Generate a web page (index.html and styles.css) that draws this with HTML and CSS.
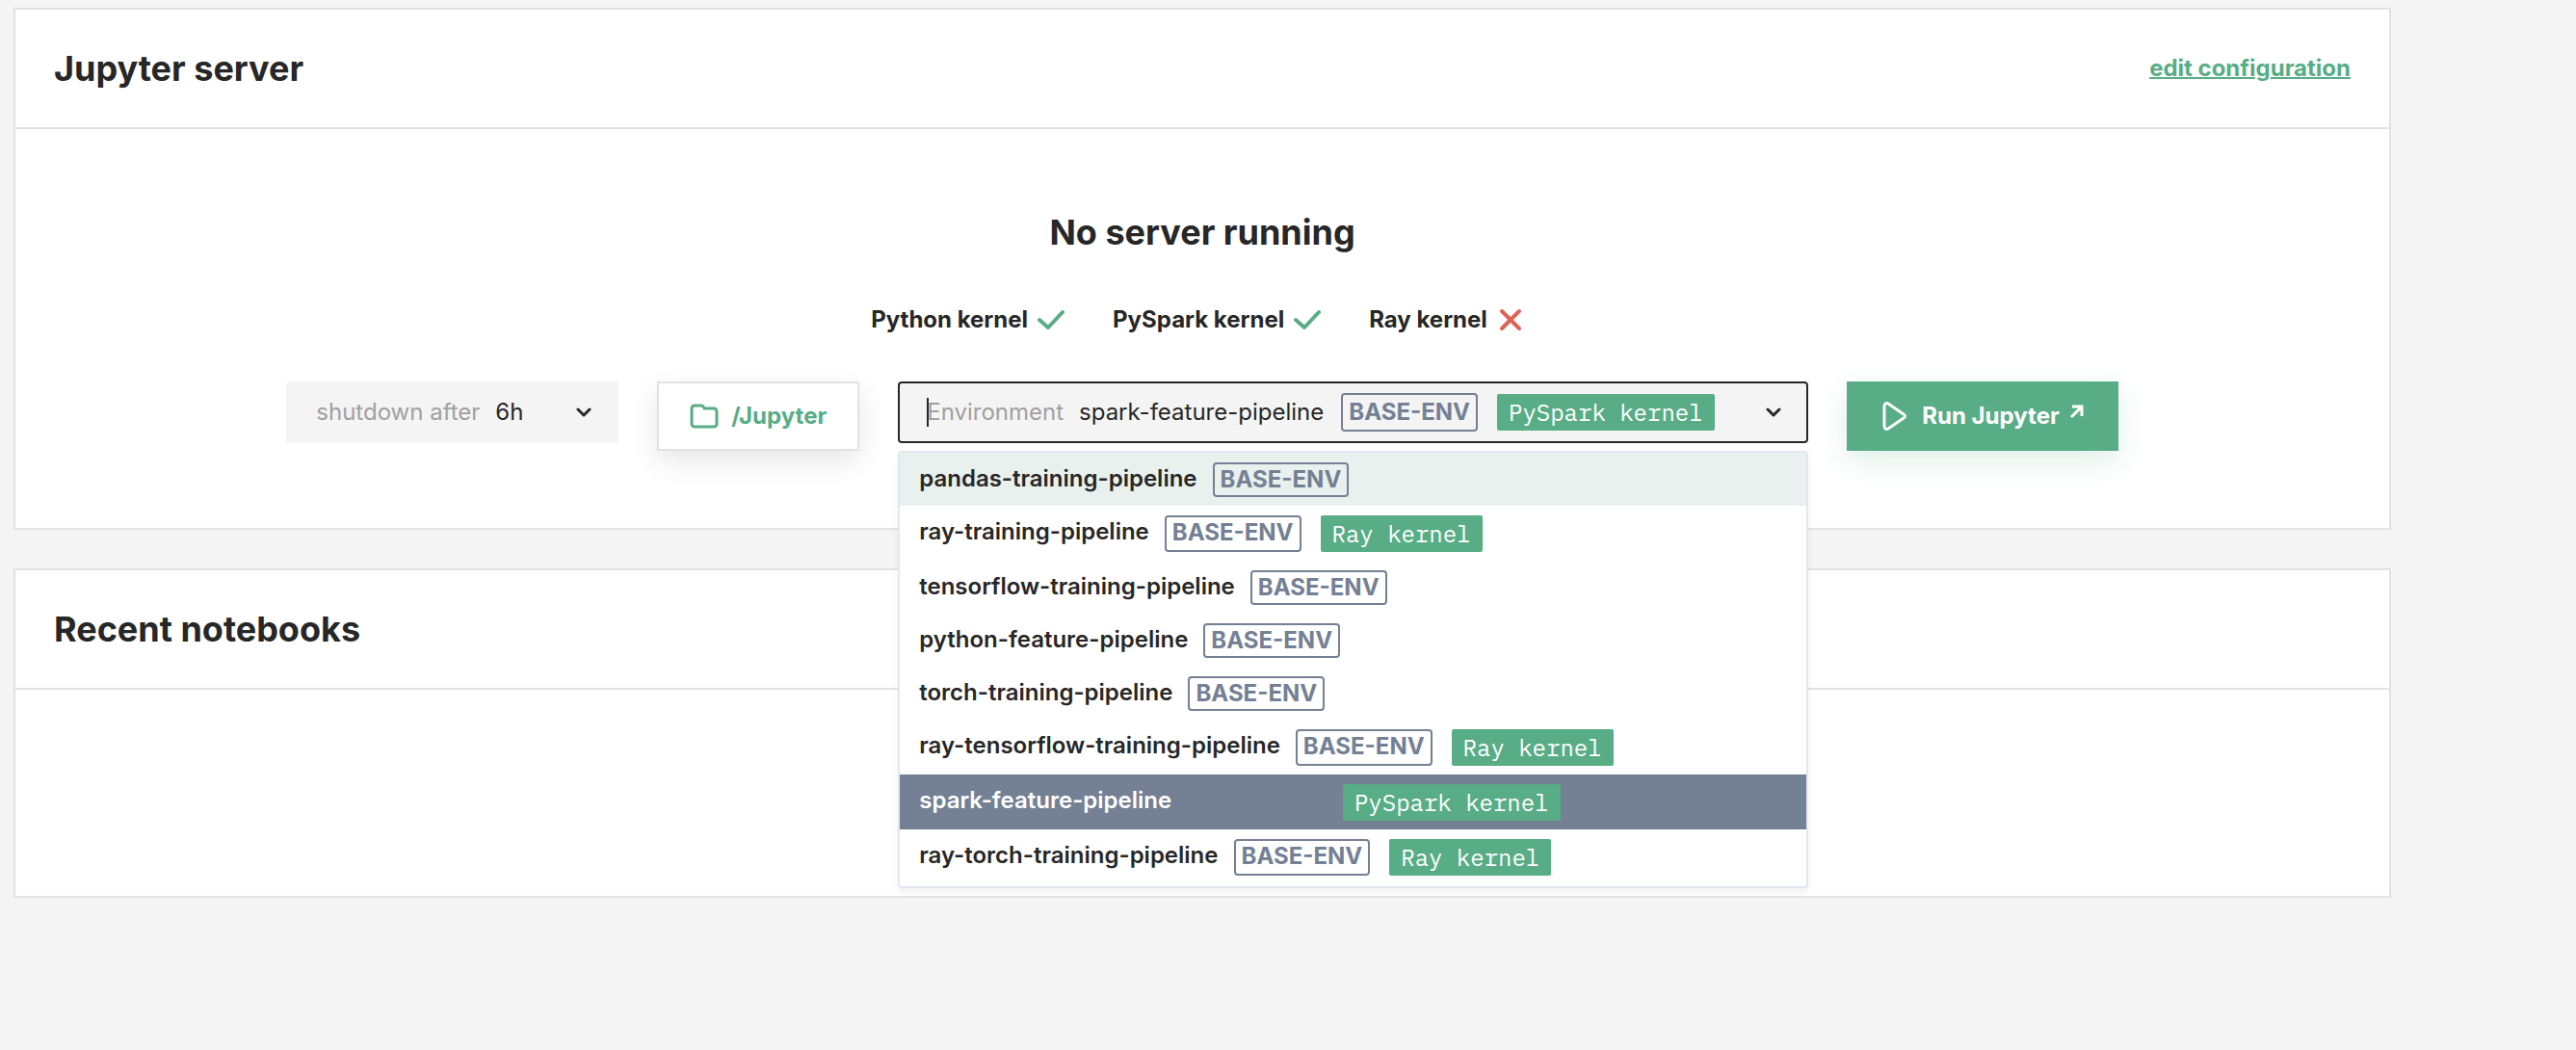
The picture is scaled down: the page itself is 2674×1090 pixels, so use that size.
FILE: index.html
```html
<!DOCTYPE html>
<html lang="en">
<head>
<meta charset="utf-8">
<title>Jupyter server</title>
<meta name="viewport" content="width=device-width, initial-scale=1">
<link rel="stylesheet" href="styles.css">
</head>
<body>
<main class="page">
  <section class="card">
    <header class="card-header">
      <h2 class="title">Jupyter server</h2>
      <a class="link" href="#configuration">edit configuration</a>
    </header>
    <div class="card-body server">
      <h3 class="title">No server running</h3>
      <ul class="kernels">
        <li class="kernel">Python kernel
          <svg class="mark mark-ok" viewBox="0 0 28 24" aria-label="available"><path d="M2 12l9 8L26 4"/></svg>
        </li>
        <li class="kernel">PySpark kernel
          <svg class="mark mark-ok" viewBox="0 0 28 24" aria-label="available"><path d="M2 12l9 8L26 4"/></svg>
        </li>
        <li class="kernel">Ray kernel
          <svg class="mark mark-no" viewBox="0 0 28 24" aria-label="unavailable"><path d="M5 3l18 18M23 3L5 21"/></svg>
        </li>
      </ul>
      <div class="controls">
        <div class="field field-shutdown">
          <label class="field-label" for="shutdown">shutdown after</label>
          <select class="field-select" id="shutdown">
            <option>6h</option>
          </select>
          <svg class="chevron" viewBox="0 0 16 10" aria-hidden="true"><path d="M2 2l6 6 6-6"/></svg>
        </div>
        <button class="btn btn-outline" type="button">
          <svg class="icon-folder" viewBox="0 0 30 26" aria-hidden="true"><path d="M2 5a3 3 0 0 1 3-3h7q2 0 3 3h10a3 3 0 0 1 3 3v13a3 3 0 0 1-3 3H5a3 3 0 0 1-3-3z"/></svg>
          /Jupyter
        </button>
        <div class="environment">
          <button class="field field-open" type="button" role="combobox" aria-expanded="true" aria-controls="environments">
            <span class="caret"></span>
            <span class="field-label">Environment</span>
            <span class="field-value">spark-feature-pipeline</span>
            <span class="tag">BASE-ENV</span>
            <span class="tag-kernel">PySpark kernel</span>
            <svg class="chevron" viewBox="0 0 16 10" aria-hidden="true"><path d="M2 2l6 6 6-6"/></svg>
          </button>
          <ul class="options" id="environments" role="listbox" aria-label="Environment">
            <li class="option option-hover" role="option"><span>pandas-training-pipeline</span><span class="tag">BASE-ENV</span></li>
            <li class="option" role="option"><span>ray-training-pipeline</span><span class="tag">BASE-ENV</span><span class="tag-kernel">Ray kernel</span></li>
            <li class="option" role="option"><span>tensorflow-training-pipeline</span><span class="tag">BASE-ENV</span></li>
            <li class="option" role="option"><span>python-feature-pipeline</span><span class="tag">BASE-ENV</span></li>
            <li class="option" role="option"><span>torch-training-pipeline</span><span class="tag">BASE-ENV</span></li>
            <li class="option" role="option"><span>ray-tensorflow-training-pipeline</span><span class="tag">BASE-ENV</span><span class="tag-kernel">Ray kernel</span></li>
            <li class="option option-selected" role="option" aria-selected="true"><span>spark-feature-pipeline</span><span class="tag">BASE-ENV</span><span class="tag-kernel">PySpark kernel</span></li>
            <li class="option" role="option"><span>ray-torch-training-pipeline</span><span class="tag">BASE-ENV</span><span class="tag-kernel">Ray kernel</span></li>
          </ul>
        </div>
        <button class="btn btn-primary" type="button">
          <svg class="icon-play" viewBox="0 0 26 30" aria-hidden="true"><path d="M3 5v20c0 3 2 4 4 3l16-11c2-1 2-3 0-4L7 2C5 1 3 2 3 5z"/></svg>
          Run Jupyter
          <svg class="icon-arrow" viewBox="0 0 14 14" aria-hidden="true"><path d="M1 13L12 2M2 2h10v10"/></svg>
        </button>
      </div>
    </div>
  </section>
  <section class="card">
    <header class="card-header">
      <h2 class="title">Recent notebooks</h2>
    </header>
    <div class="card-body notebooks"></div>
  </section>
</main>
</body>
</html>
```
FILE: styles.css
```css
:root {
  --ink: #272727;
  --green: #58ad86;
  --slate: #748094;
  --line: #e2e2e2;
  --ground: #f4f4f4;
  --muted: #a0a0a0;
}

* {
  box-sizing: border-box;
}

body {
  margin: 0;
  background: var(--ground);
  color: var(--ink);
  font-family: Inter, "Liberation Sans", sans-serif;
  font-size: 24px;
  line-height: 30px;
}

ul {
  margin: 0;
  padding: 0;
  list-style: none;
}

button,
select {
  font: inherit;
  color: inherit;
  margin: 0;
}

svg {
  flex: none;
  fill: none;
  stroke: currentColor;
  stroke-width: 3;
  stroke-linecap: round;
  stroke-linejoin: round;
}

.page {
  display: flex;
  flex-direction: column;
  gap: 40px;
  padding: 8px 192px 40px 14px;
}

.card {
  background: #fff;
  border: 2px solid var(--line);
}

.card-header {
  display: flex;
  align-items: center;
  justify-content: space-between;
  padding: 39px 40px;
  border-bottom: 2px solid var(--line);
}

.title {
  margin: 0;
  font-size: 36px;
  line-height: 44px;
  font-weight: 700;
}

.link {
  color: var(--green);
  font-weight: 700;
  text-decoration-thickness: 2px;
}

.server {
  display: flex;
  flex-direction: column;
  align-items: center;
  padding: 85px 40px 80px;
}

.notebooks {
  min-height: 214px;
}

.kernels {
  display: flex;
  gap: 40px;
  margin: 54px 0 49px;
}

.kernel {
  display: flex;
  align-items: center;
  gap: 10px;
  padding-right: 10px;
  font-weight: 700;
}

.mark {
  width: 28px;
  height: 24px;
  stroke-width: 4;
}

.mark-ok {
  color: var(--green);
}

.mark-no {
  color: #df6259;
}

.controls {
  display: flex;
  align-items: flex-start;
  gap: 40px;
}

.field {
  display: flex;
  align-items: center;
  width: 100%;
  height: 64px;
  padding: 0 28px 0 31px;
  background: var(--ground);
  border: 0;
  border-radius: 4px;
}

.field-shutdown {
  width: 345px;
}

.field-label {
  color: var(--muted);
  margin-right: 16px;
}

.field-select {
  flex: 1;
  padding: 0;
  background: transparent;
  border: 0;
  appearance: none;
}

.chevron {
  width: 16px;
  height: 10px;
  margin-left: auto;
}

.environment {
  position: relative;
  width: 945px;
}

.field-open {
  padding: 0 26px 0 28px;
  border: 2px solid var(--ink);
}

.field-open .field-value {
  margin-right: 18px;
}

.field-open .tag {
  padding: 4px 6px;
  margin-right: 20px;
}

.caret {
  width: 2px;
  height: 30px;
  margin-right: -2px;
  background: var(--ink);
}

.tag {
  padding: 0 6px;
  border: 2px solid var(--slate);
  border-radius: 4px;
  color: var(--slate);
  font-weight: 700;
  line-height: 28px;
}

.tag-kernel {
  padding: 4px 12px;
  border-radius: 2px;
  background: var(--green);
  color: #fff;
  font-family: "IBM Plex Mono", "Liberation Mono", monospace;
  font-weight: 400;
  line-height: 30px;
}

.options {
  position: absolute;
  top: 72px;
  left: 0;
  right: 0;
  padding-bottom: 2px;
  background: #fff;
  border: 2px solid #e2e8f0;
  border-radius: 4px;
  box-shadow: 0 4px 6px rgba(0, 0, 0, 0.06);
}

.option {
  display: flex;
  align-items: stretch;
  padding: 10px 20px 9px;
  font-weight: 600;
  line-height: 34px;
}

.option .tag {
  margin-left: 16px;
  line-height: 32px;
}

.option .tag-kernel {
  margin-left: 20px;
}

.option-hover {
  background: #e8f1ed;
}

.option-selected {
  background: var(--slate);
  color: #fff;
}

.btn {
  display: flex;
  align-items: center;
  height: 72px;
  padding: 0 32px;
  border: 2px solid var(--line);
  color: var(--green);
  background: #fff;
  font-weight: 700;
}

.btn-outline {
  gap: 13px;
  box-shadow: 0 10px 30px rgba(0, 0, 0, 0.1);
}

.btn-primary {
  padding: 0 34px;
  color: #fff;
  background: var(--green);
  border-color: var(--green);
  box-shadow: 0 10px 30px rgba(88, 173, 134, 0.2);
}

.icon-folder {
  width: 30px;
  height: 26px;
}

.icon-play {
  width: 26px;
  height: 30px;
  margin-right: 16px;
}

.icon-arrow {
  width: 14px;
  height: 14px;
  margin: 0 0 10px 11px;
  stroke-linecap: butt;
  stroke-linejoin: miter;
}
```
